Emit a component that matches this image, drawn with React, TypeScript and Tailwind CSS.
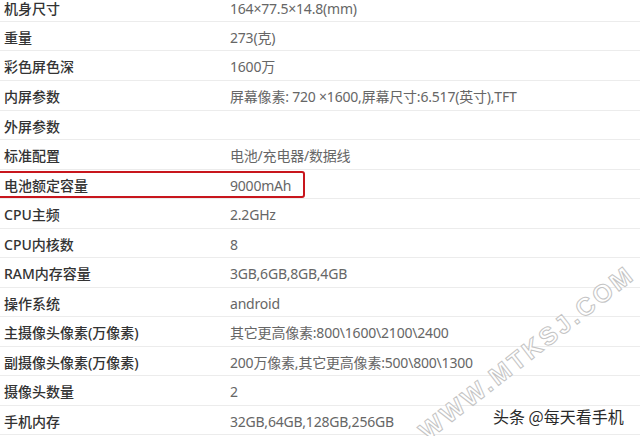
const rows = [
  { label: "机身尺寸", value: "164×77.5×14.8(mm)", h: "h-[22px] pb-[5px]" },
  { label: "重量", value: "273(克)", h: "h-[29px] pt-[2px]" },
  { label: "彩色屏色深", value: "1600万", h: "h-[30px] pt-[2px]" },
  { label: "内屏参数", value: "屏幕像素: 720 ×1600,屏幕尺寸:6.517(英寸),TFT", h: "h-[30px] pt-[2px]" },
  { label: "外屏参数", value: "", h: "h-[29px] pt-[2px]" },
  { label: "标准配置", value: "电池/充电器/数据线", h: "h-[30px] pt-[2px]" },
  { label: "电池额定容量", value: "9000mAh", h: "h-[29px] pt-[2px]", mark: true },
  { label: "CPU主频", value: "2.2GHz", h: "h-[30px] pt-[2px]" },
  { label: "CPU内核数", value: "8", h: "h-[29px] pt-[2px]" },
  { label: "RAM内存容量", value: "3GB,6GB,8GB,4GB", h: "h-[30px] pt-[2px]" },
  { label: "操作系统", value: "android", h: "h-[29px] pt-[2px]" },
  { label: "主摄像头像素(万像素)", value: "其它更高像素:800\\1600\\2100\\2400", h: "h-[30px] pt-[2px]" },
  { label: "副摄像头像素(万像素)", value: "200万像素,其它更高像素:500\\800\\1300", h: "h-[29px] pt-[2px]" },
  { label: "摄像头数量", value: "2", h: "h-[30px] pt-[2px]" },
  { label: "手机内存", value: "32GB,64GB,128GB,256GB", h: "h-[29px] pt-[2px]" },
];

export default function App() {
  return (
    <div className="relative w-[640px] h-[436px] overflow-hidden bg-white font-['Microsoft_YaHei','Noto_Sans','Noto_Sans_CJK_SC',sans-serif] text-[14px]">
      {/* spec table */}
      <div className="flex flex-col">
        {rows.map((r) => (
          <div
            key={r.label}
            className={`relative flex items-center border-b border-[#ececec] ${r.h}`}
          >
            <div className="w-[230px] shrink-0 pl-[4px] font-medium text-[#333]">
              {r.label}
            </div>
            <div className="text-[#666] tracking-[-0.2px]">{r.value}</div>
            {r.mark && (
              <div className="absolute left-[-3px] top-[1px] w-[308px] h-[27px] border-2 border-[#c8161d] rounded-[3px]" />
            )}
          </div>
        ))}
      </div>

      {/* site watermark */}
      <div className="absolute left-[377px] top-[334px] w-[300px] text-center rotate-[-38deg] font-['Liberation_Sans',sans-serif] font-bold text-[25px] tracking-[3px] text-white [-webkit-text-stroke:1px_#c4c4c4] select-none">
        WWW.MTKSJ.COM
      </div>

      {/* author tag */}
      <div className="absolute left-[493px] top-[404px] text-[16px] text-[#2a2a2a] font-['Noto_Sans_CJK_SC',sans-serif] [text-shadow:0_0_2px_#fff,1px_1px_1px_#fff]">
        头条 @每天看手机
      </div>
    </div>
  );
}
